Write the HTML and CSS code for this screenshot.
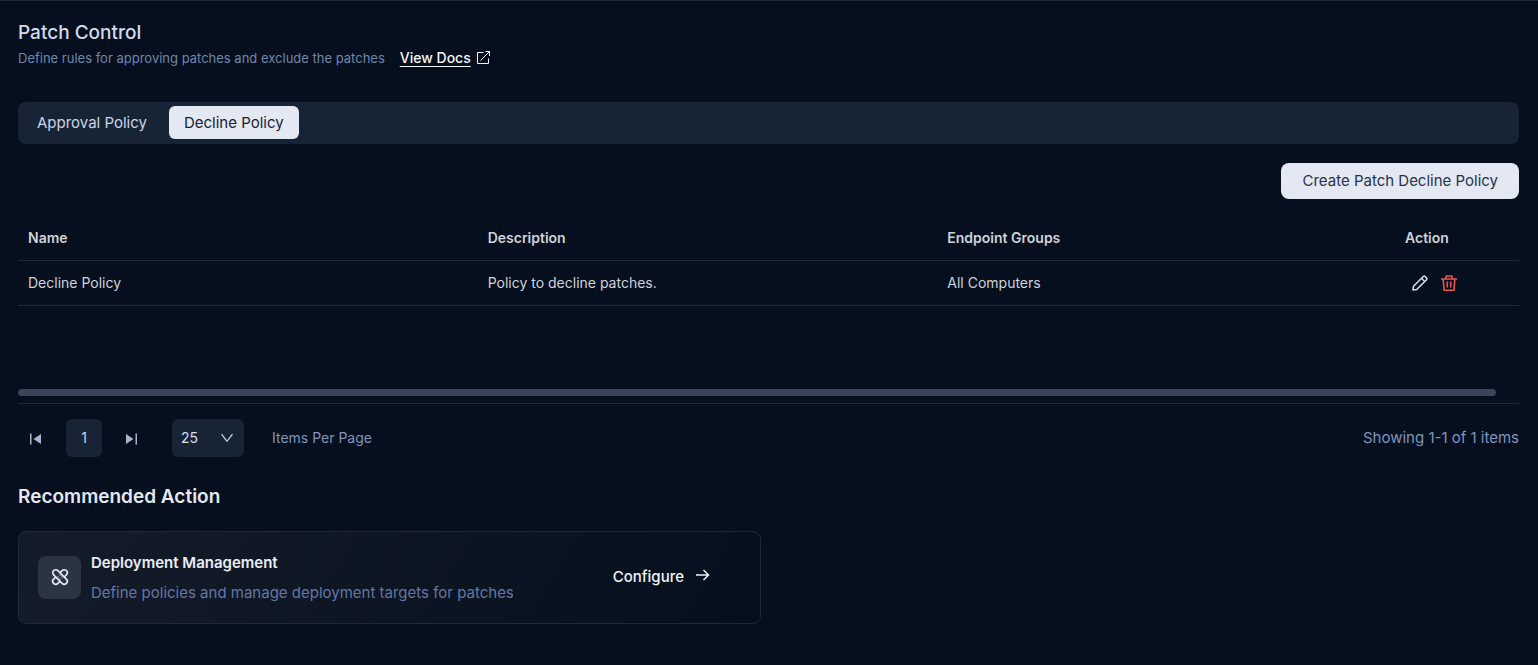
FILE: index.html
```html
<!DOCTYPE html>
<html lang="en">
<head>
<meta charset="utf-8">
<meta name="viewport" content="width=device-width, initial-scale=1">
<title>Patch Control</title>
<link rel="stylesheet" href="styles.css">
</head>
<body>
<main class="page">
  <header class="page-header">
    <h1 class="page-title">Patch Control</h1>
    <div class="page-subtitle">
      <p class="page-text">Define rules for approving patches and exclude the patches</p>
      <a class="docs-link" href="#docs"><span class="docs-label">View Docs</span><svg class="docs-icon" viewBox="0 0 14 14" width="14" height="14" fill="none" stroke="currentColor" stroke-width="1" aria-hidden="true"><path d="M7.500 1.500h-6v11h11v-5M4.500 9.500l9-9M9.500.5h4V5"/></svg></a>
    </div>
  </header>

  <nav class="tabs" aria-label="Policy type">
    <button class="tab" type="button">Approval Policy</button>
    <button class="tab tab-active" type="button" aria-current="true">Decline Policy</button>
  </nav>

  <div class="toolbar">
    <button class="create-button" type="button">Create Patch Decline Policy</button>
  </div>

  <section class="table-area" aria-label="Decline policies">
    <table class="table">
      <thead>
        <tr><th>Name</th><th>Description</th><th>Endpoint Groups</th><th class="col-action">Action</th></tr>
      </thead>
      <tbody>
        <tr>
          <td>Decline Policy</td><td>Policy to decline patches.</td><td>All Computers</td>
          <td class="col-action">
            <div class="row-actions">
              <button class="icon-button" type="button" aria-label="Edit"><svg viewBox="0 0 18 18" width="18" height="18" fill="none" stroke="currentColor" stroke-width="1.600" stroke-linejoin="round" aria-hidden="true"><path d="M2 16l.5-3.700L12.300 2.500a1.300 1.300 0 0 1 1.800 0l1.400 1.400a1.300 1.300 0 0 1 0 1.800L5.700 15.500zM10.500 4.300l3.200 3.200"/></svg></button>
              <button class="icon-button icon-danger" type="button" aria-label="Delete"><svg viewBox="0 0 18 18" width="18" height="18" fill="none" stroke="currentColor" stroke-width="1.600" stroke-linejoin="round" aria-hidden="true"><path d="M1 5h16M5.500 4.800L6.200 2h5.600l.7 2.800M3.200 5l.8 11.200h10L14.800 5M7.300 7.500v6M10.700 7.500v6"/></svg></button>
            </div>
          </td>
        </tr>
      </tbody>
    </table>
    <div class="scroll-track"><div class="scroll-thumb"></div></div>
  </section>

  <footer class="pager">
    <div class="pager-pages">
      <button class="page-step" type="button" aria-label="First page"><svg viewBox="0 0 12 12" width="12" height="12" fill="currentColor" aria-hidden="true"><path d="M0 .5h1.500v11H0zM11 1v10L3.500 6z"/></svg></button>
      <button class="page-number" type="button" aria-current="page">1</button>
      <button class="page-step" type="button" aria-label="Last page"><svg viewBox="0 0 12 12" width="12" height="12" fill="currentColor" aria-hidden="true"><path d="M9.500 .5H11v11H9.500zM0 1v10l7.500-5z"/></svg></button>
    </div>
    <div class="page-size">
      <div class="select-wrap">
        <select class="select" id="page-size"><option>25</option><option>50</option><option>100</option></select>
        <svg class="select-arrow" viewBox="0 0 12 10" width="12" height="10" fill="none" stroke="currentColor" stroke-width="1.300" aria-hidden="true"><path d="M.5 1.200L6 8.300L11.500 1.200"/></svg>
      </div>
      <label class="page-size-label" for="page-size">Items Per Page</label>
    </div>
    <p class="pager-summary">Showing 1-1 of 1 items</p>
  </footer>

  <section class="recommended">
    <h2 class="section-title">Recommended Action</h2>
    <article class="card">
      <div class="card-icon"><svg viewBox="0 0 18 18" width="18" height="18" fill="none" stroke="currentColor" stroke-width="1.700" aria-hidden="true"><g transform="rotate(45 9 9)"><rect x="0" y="6" width="18" height="6" rx="3"/><path d="M6 6V3a3 3 0 0 1 6 0v3M6 12v3a3 3 0 0 0 6 0v-3"/></g><path d="M8.400 7h1.200M8.400 11h1.200M6.400 9h1.200M10.400 9h1.200" stroke-width="1.100"/></svg></div>
      <div class="card-body">
        <h3 class="card-title">Deployment Management</h3>
        <p class="card-text">Define policies and manage deployment targets for patches</p>
      </div>
      <a class="card-link" href="#configure">Configure<svg class="card-arrow" viewBox="0 0 14 16" width="14" height="16" fill="none" stroke="currentColor" stroke-width="1.500" aria-hidden="true"><path d="M0 6h13M7.500 1l5 5-5 5"/></svg></a>
    </article>
  </section>
</main>
</body>
</html>
```

FILE: styles.css
```css
* { box-sizing: border-box; }

body {
  margin: 0;
  background: #050f1d;
  color: #d0d3da;
  font-family: Inter, "Liberation Sans", sans-serif;
  font-size: 14px;
  line-height: 20px;
}

h1, h2, h3, p { margin: 0; }

button, select {
  border: 0;
  font: inherit;
  color: inherit;
  background: none;
  padding: 0;
}

svg { display: block; }

.page {
  border-top: 1px solid #1a2738;
  padding: 20px 19px 40px 18px;
}

.page-title {
  color: #d3daea;
  font-size: 19px;
  font-weight: 500;
  line-height: 24px;
}

.page-subtitle {
  display: flex;
  align-items: center;
  gap: 15px;
}

.page-text { color: #6f87aa; font-size: 13px; }

.docs-link {
  display: flex;
  align-items: center;
  gap: 5px;
  color: #f4f6fa;
  font-size: 14px;
  font-weight: 500;
  line-height: 26px;
  text-decoration: none;
}

.docs-label { text-decoration: underline; text-underline-offset: 3px; }

.tabs {
  display: flex;
  gap: 7px;
  margin-top: 31px;
  padding: 4px 4px 5px;
  border-radius: 8px;
  background: #172436;
}

.tab {
  padding: 6px 15px;
  border-radius: 6px;
  color: #cbd5e7;
  font-size: 15px;
  line-height: 21px;
}

.tab-active { background: #e4e8f3; color: #172236; }

.toolbar {
  display: flex;
  justify-content: flex-end;
  margin-top: 19px;
}

.create-button {
  padding: 8px 21px;
  border-radius: 8px;
  background: #e4e8f3;
  color: #26334a;
  font-size: 15px;
}

.table-area {
  margin-top: 18px;
  border-bottom: 1px solid #1b2938;
}

.table {
  width: 100%;
  table-layout: fixed;
  border-collapse: collapse;
}

.table th, .table td {
  height: 45px;
  padding: 0 10px;
  border-bottom: 1px solid #1b2938;
  text-align: left;
}

.table th { font-weight: 600; height: 43px; }
.table .col-action { width: 122px; padding: 0 8px; }

.row-actions {
  display: flex;
  gap: 11px;
  padding-left: 6px;
}

.icon-button { color: #d3dae8; }
.icon-danger { color: #ea5455; }

.scroll-track { margin-top: 83px; padding: 0 23px 7px 0; }

.scroll-thumb {
  height: 7px;
  border-radius: 4px;
  background: #38465c;
}

.pager {
  display: flex;
  align-items: center;
  margin-top: 15px;
  color: #8094bd;
}

.pager-pages { display: flex; gap: 12px; }

.page-step {
  display: grid;
  place-items: center;
  width: 36px;
  height: 38px;
  padding-top: 2px;
  color: #a3b5d0;
}

.page-number {
  width: 36px;
  height: 38px;
  border-radius: 6px;
  background: #172436;
  color: #cbd5e7;
}

.page-size {
  display: flex;
  align-items: center;
  gap: 28px;
  margin-left: 22px;
}

.select-wrap { display: grid; align-items: center; }

.select {
  grid-area: 1 / 1;
  appearance: none;
  width: 72px;
  height: 38px;
  padding: 0 9px;
  border-radius: 6px;
  background: #172436;
  color: #d8deea;
  font-size: 14px;
}

.select-arrow {
  grid-area: 1 / 1;
  justify-self: end;
  margin-right: 11px;
  color: #cbd5e7;
  pointer-events: none;
}

.pager-summary { margin-left: auto; font-size: 15px; }

.recommended { margin-top: 28px; }

.section-title {
  color: #e4e8f3;
  font-size: 19px;
  font-weight: 600;
  line-height: 24px;
}

.card {
  display: flex;
  align-items: center;
  gap: 10px;
  width: 50%;
  max-width: 743px;
  margin-top: 22px;
  padding: 16px 50px 16px 19px;
  border: 1px solid #1c2939;
  border-radius: 8px;
  background: linear-gradient(120deg, #151c29, #050f1d);
}

.card-icon {
  display: grid;
  place-items: center;
  width: 43px;
  height: 43px;
  border-radius: 8px;
  background: #2b3441;
  color: #e4e8f3;
}

.card-title {
  color: #e9edf5;
  font-size: 15px;
  font-weight: 600;
  line-height: 30px;
}

.card-text { color: #6377a6; font-size: 15px; line-height: 29px; }

.card-link {
  display: flex;
  align-items: center;
  gap: 12px;
  margin-left: auto;
  color: #f0f3f8;
  font-size: 15px;
  font-weight: 500;
  text-decoration: none;
}
```
